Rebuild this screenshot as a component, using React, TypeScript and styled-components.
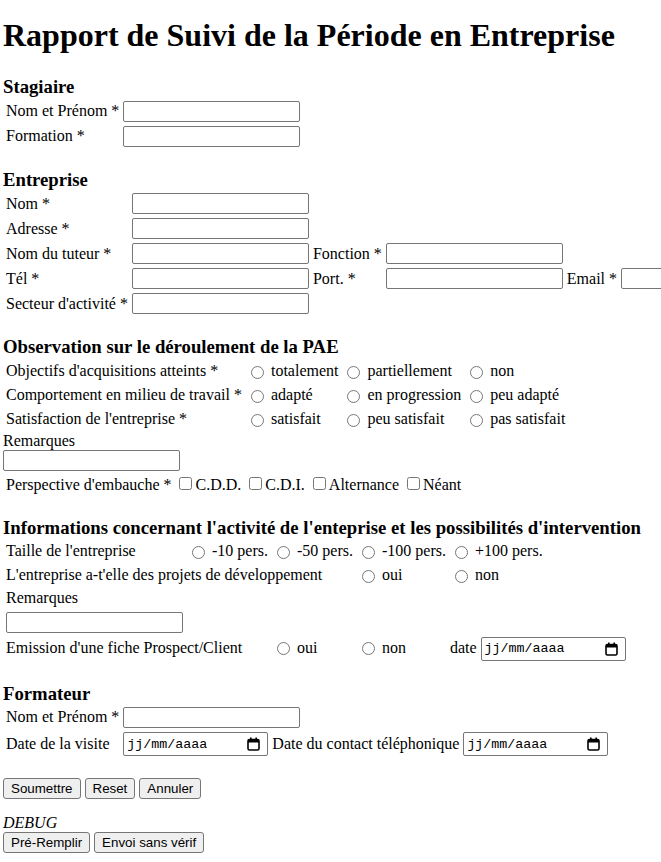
import React from "react"
import styled, { createGlobalStyle } from "styled-components"

const GlobalStyle = createGlobalStyle`
  html {
    overflow: hidden;
  }
  body {
    margin: 0;
    padding: 0 0 0 3px;
    font-family: "Liberation Serif", "Times New Roman", serif;
    font-size: 16px;
    line-height: 1.15;
    color: #000;
    background: #fff;
  }
`

const Title = styled.h1`
  margin: 17px 0 0;
  font-size: 32px;
  font-weight: bold;
  line-height: 1.15;
  white-space: nowrap;
`

const Section = styled.section<{ $top?: number }>`
  margin-top: ${(p) => p.$top ?? 19}px;
`

const SectionTitle = styled.h3`
  margin: 0;
  font-size: 18.72px;
  font-weight: bold;
  line-height: 1.15;
  white-space: nowrap;
`

const Grid = styled.div<{ $cols: string }>`
  display: grid;
  grid-template-columns: ${(p) => p.$cols};
  gap: 4px;
  padding: 3px;
  align-items: center;
  width: max-content;
`

const Cell = styled.div<{ $span?: number; $col?: number }>`
  grid-column: ${(p) =>
    p.$col ? `${p.$col} / span ${p.$span ?? 1}` : p.$span ? `span ${p.$span}` : "auto"};
  white-space: nowrap;
`

const TextInput = styled.input`
  box-sizing: border-box;
  display: block;
  width: 177px;
  height: 21px;
  margin: 0;
  padding: 1px 2px;
  border: 1px solid #767676;
  border-radius: 2px;
  background: #fff;
  font: 13.33px "Liberation Sans", Arial, sans-serif;
`

const Option = styled.label<{ $lift?: boolean }>`
  display: flex;
  align-items: center;
  height: 20px;
  white-space: nowrap;

  input {
    width: 13px;
    height: 13px;
    margin: ${(p) => (p.$lift ? "0 7px 0 5px" : "3px 7px 0 5px")};
  }
`

const PlainLabel = styled.div`
  white-space: nowrap;
`

const CheckRow = styled.div`
  padding: 3px;
  white-space: nowrap;
`

const DateBox = styled.span`
  box-sizing: border-box;
  display: inline-flex;
  align-items: center;
  justify-content: space-between;
  width: 145px;
  height: 24px;
  padding: 0 7px 0 3px;
  border: 1px solid #767676;
  border-radius: 2px;
  background: #fff;
  font: 13.33px "Liberation Mono", "DejaVu Sans Mono", monospace;
`

const DateRow = styled.div`
  display: flex;
  align-items: center;
  gap: 4px;
  white-space: nowrap;
`

const ButtonRow = styled.div<{ $top: number }>`
  display: flex;
  gap: 4px;
  margin-top: ${(p) => p.$top}px;
`

const Button = styled.button`
  box-sizing: border-box;
  height: 21px;
  margin: 0;
  padding: 1px 7px;
  border: 1px solid #767676;
  border-radius: 3px;
  background: #efefef;
  color: #000;
  font: 13.33px "Liberation Sans", Arial, sans-serif;
`

const Debug = styled.div`
  margin-top: 15px;
  font-style: italic;
`

const Radio = ({ name, label, lift }: { name: string; label: string; lift?: boolean }) => (
  <Option $lift={lift}>
    <input type="radio" name={name} />
    {label}
  </Option>
)

const CalendarIcon = () => (
  <svg width="13" height="14" viewBox="0 0 13 14">
    <rect x="1" y="2.5" width="11" height="10.5" rx="1.5" fill="none" stroke="#000" strokeWidth="1.6" />
    <rect x="1" y="2.5" width="11" height="3" fill="#000" />
    <rect x="3" y="0.5" width="1.6" height="3" fill="#000" />
    <rect x="8.4" y="0.5" width="1.6" height="3" fill="#000" />
  </svg>
)

const DateField = () => (
  <DateBox>
    <span>jj/mm/aaaa</span>
    <CalendarIcon />
  </DateBox>
)

export default function App() {
  return (
    <>
      <GlobalStyle />
      <Title>Rapport de Suivi de la Période en Entreprise</Title>

      <Section $top={22.5}>
        <SectionTitle>Stagiaire</SectionTitle>
        <Grid $cols="auto auto">
          <Cell>Nom et Prénom *</Cell>
          <Cell><TextInput /></Cell>
          <Cell>Formation *</Cell>
          <Cell><TextInput /></Cell>
        </Grid>
      </Section>

      <Section>
        <SectionTitle>Entreprise</SectionTitle>
        <Grid $cols="auto auto auto auto auto auto">
          <Cell $col={1}>Nom *</Cell>
          <Cell><TextInput /></Cell>
          <Cell $col={1}>Adresse *</Cell>
          <Cell><TextInput /></Cell>
          <Cell $col={1}>Nom du tuteur *</Cell>
          <Cell><TextInput /></Cell>
          <Cell>Fonction *</Cell>
          <Cell><TextInput /></Cell>
          <Cell $col={1}>Tél *</Cell>
          <Cell><TextInput /></Cell>
          <Cell>Port. *</Cell>
          <Cell><TextInput /></Cell>
          <Cell>Email *</Cell>
          <Cell><TextInput /></Cell>
          <Cell $col={1}>Secteur d'activité *</Cell>
          <Cell><TextInput /></Cell>
        </Grid>
      </Section>

      <Section>
        <SectionTitle>Observation sur le déroulement de la PAE</SectionTitle>
        <Grid $cols="auto auto auto auto">
          <Cell>Objectifs d'acquisitions atteints *</Cell>
          <Cell><Radio name="obj" label="totalement" /></Cell>
          <Cell><Radio name="obj" label="partiellement" /></Cell>
          <Cell><Radio name="obj" label="non" /></Cell>
          <Cell>Comportement en milieu de travail *</Cell>
          <Cell><Radio name="comp" label="adapté" /></Cell>
          <Cell><Radio name="comp" label="en progression" /></Cell>
          <Cell><Radio name="comp" label="peu adapté" /></Cell>
          <Cell>Satisfaction de l'entreprise *</Cell>
          <Cell><Radio name="sat" label="satisfait" /></Cell>
          <Cell><Radio name="sat" label="peu satisfait" /></Cell>
          <Cell><Radio name="sat" label="pas satisfait" /></Cell>
        </Grid>
        <PlainLabel>Remarques</PlainLabel>
        <TextInput />
        <CheckRow>
          Perspective d'embauche * <input type="checkbox" />C.D.D. <input type="checkbox" />C.D.I.{" "}
          <input type="checkbox" />Alternance <input type="checkbox" />Néant
        </CheckRow>
      </Section>

      <Section>
        <SectionTitle>
          Informations concernant l'activité de l'enteprise et les possibilités d'intervention
        </SectionTitle>
        <Grid $cols="177px auto auto auto auto">
          <Cell>Taille de l'entreprise</Cell>
          <Cell><Radio name="taille" label="-10 pers." /></Cell>
          <Cell><Radio name="taille" label="-50 pers." /></Cell>
          <Cell><Radio name="taille" label="-100 pers." /></Cell>
          <Cell><Radio name="taille" label="+100 pers." /></Cell>
          <Cell $col={1} $span={3}>L'entreprise a-t'elle des projets de développement</Cell>
          <Cell><Radio name="dev" label="oui" /></Cell>
          <Cell><Radio name="dev" label="non" /></Cell>
          <Cell $col={1}>Remarques</Cell>
          <Cell $col={1}><TextInput /></Cell>
          <Cell $col={1} $span={2}>Emission d'une fiche Prospect/Client</Cell>
          <Cell><Radio name="fiche" label="oui" lift /></Cell>
          <Cell><Radio name="fiche" label="non" lift /></Cell>
          <Cell>
            date <DateField />
          </Cell>
        </Grid>
      </Section>

      <Section>
        <SectionTitle>Formateur</SectionTitle>
        <Grid $cols="auto auto">
          <Cell>Nom et Prénom *</Cell>
          <Cell><TextInput /></Cell>
          <Cell>Date de la visite</Cell>
          <Cell>
            <DateRow>
              <DateField />
              Date du contact téléphonique
              <DateField />
            </DateRow>
          </Cell>
        </Grid>
      </Section>

      <ButtonRow $top={19}>
        <Button>Soumettre</Button>
        <Button>Reset</Button>
        <Button>Annuler</Button>
      </ButtonRow>

      <Debug>DEBUG</Debug>
      <ButtonRow $top={0}>
        <Button>Pré-Remplir</Button>
        <Button>Envoi sans vérif</Button>
      </ButtonRow>
    </>
  )
}
